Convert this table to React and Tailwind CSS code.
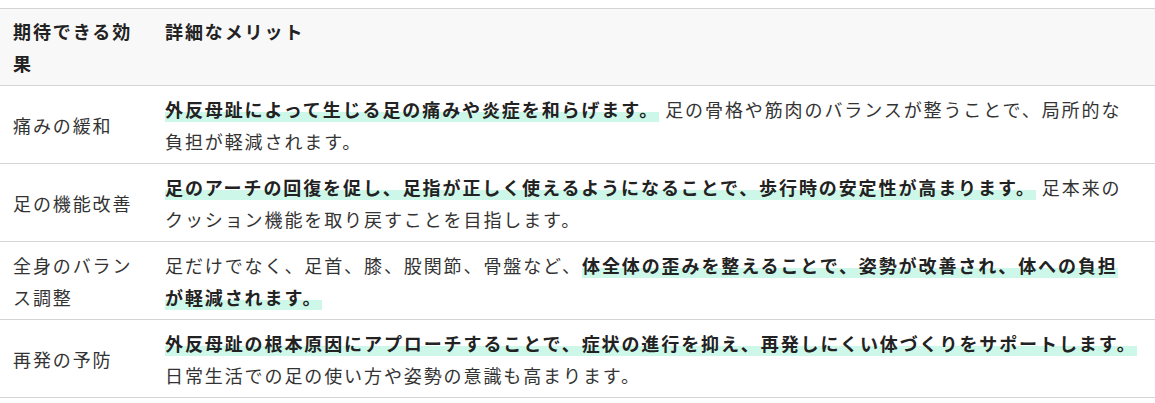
import React from 'react';

// --- 外反母趾ケアの効果テーブル ---

const rows = [
  {
    effect: '痛みの緩和',
    parts: [
      { b: true, t: '外反母趾によって生じる足の痛みや炎症を和らげます。' },
      { t: ' 足の骨格や筋肉のバランスが整うことで、局所的な負担が軽減されます。' },
    ],
  },
  {
    effect: '足の機能改善',
    parts: [
      { b: true, t: '足のアーチの回復を促し、足指が正しく使えるようになることで、歩行時の安定性が高まります。' },
      { t: ' 足本来のクッション機能を取り戻すことを目指します。' },
    ],
  },
  {
    effect: '全身のバランス調整',
    parts: [
      { t: '足だけでなく、足首、膝、股関節、骨盤など、' },
      { b: true, t: '体全体の歪みを整えることで、姿勢が改善され、体への負担が軽減されます。' },
    ],
  },
  {
    effect: '再発の予防',
    parts: [
      { b: true, t: '外反母趾の根本原因にアプローチすることで、症状の進行を抑え、再発しにくい体づくりをサポートします。' },
      { t: ' 日常生活での足の使い方や姿勢の意識も高まります。' },
    ],
  },
];

const Marker = ({ children }) => (
  <strong className="font-bold text-[#222] bg-[linear-gradient(transparent_60%,#cdf7e9_60%)]">{children}</strong>
);

export default function App() {
  return (
    <div className="bg-white pt-2 font-['Noto_Sans_CJK_JP','Noto_Sans',sans-serif] text-[18px] leading-[32px] tracking-[1.9px] text-[#333]">
      <table className="w-full border-collapse">
        <thead>
          <tr className="bg-[#f8f8f8] border-y border-[#d4d4d4]">
            <th className="w-[152px] px-[13px] py-[6px] text-left align-top font-bold text-[#222]">期待できる効果</th>
            <th className="pl-[13px] pr-[18px] py-[6px] text-left align-top font-bold text-[#222]">詳細なメリット</th>
          </tr>
        </thead>
        <tbody>
          {rows.map((row) => (
            <tr key={row.effect} className="border-b border-[#d4d4d4]">
              <td className="px-[13px] pt-[7px] pb-[6px] align-middle">{row.effect}</td>
              <td className="pl-[13px] pr-[18px] pt-[7px] pb-[6px] align-middle">
                {row.parts.map((p, i) => (p.b ? <Marker key={i}>{p.t}</Marker> : <span key={i}>{p.t}</span>))}
              </td>
            </tr>
          ))}
        </tbody>
      </table>
    </div>
  );
}
